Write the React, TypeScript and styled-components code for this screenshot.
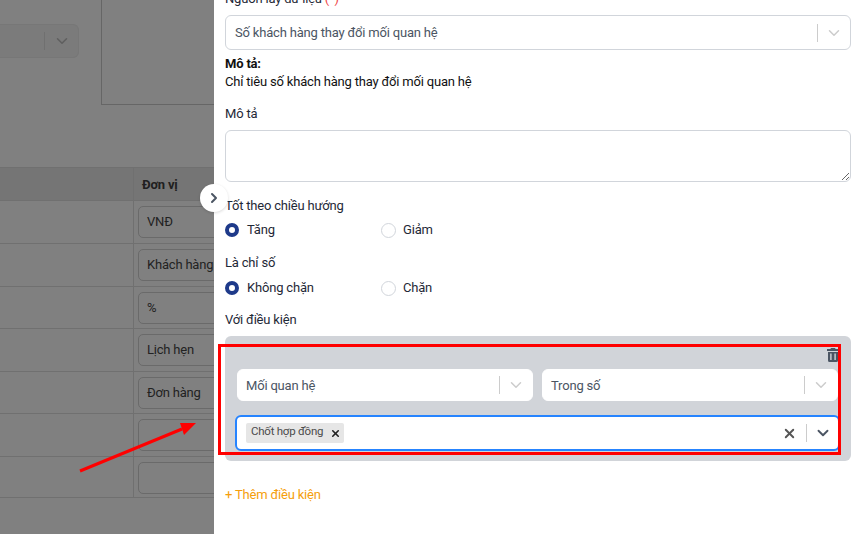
import React from "react";
import styled, { createGlobalStyle } from "styled-components";
import { ChevronDown, ChevronRight, X } from "lucide-react";

const GlobalStyle = createGlobalStyle`
  html, body {
    margin: 0;
    padding: 0;
    overflow: hidden;
    font-family: Roboto, "Liberation Sans", sans-serif;
  }
  * { box-sizing: border-box; }
`;

const units = [
  { label: "VNĐ", height: 43 },
  { label: "Khách hàng", height: 43 },
  { label: "%", height: 42 },
  { label: "Lịch hẹn", height: 43 },
  { label: "Đơn hàng", height: 42 },
  { label: "", height: 43 },
  { label: "", height: 40 },
];

const Page = styled.div`
  position: relative;
  display: flex;
  width: 861px;
  height: 534px;
  overflow: hidden;
`;

const Backdrop = styled.div`
  flex: 0 0 214px;
  background: #808080;
  overflow: hidden;
`;

const TopRow = styled.div`
  display: flex;
  height: 105px;
`;

const DimSelect = styled.div`
  flex: 0 0 79px;
  height: 34px;
  margin-top: 24px;
  display: flex;
  align-items: center;
  justify-content: flex-end;
  padding-right: 7px;
  background: #7b7b7b;
  border: 1px solid #777;
  border-left: none;
  border-radius: 0 6px 6px 0;
  color: #5f5f5f;
`;

const DimDivider = styled.span`
  width: 1px;
  height: 18px;
  margin-right: 8px;
  background: #707070;
`;

const ChartBox = styled.div`
  flex: 1;
  margin-left: 22px;
  border-left: 1px solid #666;
  border-bottom: 1px solid #666;
`;

const Table = styled.div`
  margin-top: 62px;
  border-bottom: 1px solid #707070;
`;

const HeadRow = styled.div`
  display: grid;
  grid-template-columns: 133px 1fr;
  height: 34px;
  background: #757575;
  border-top: 1px solid #707070;
  border-bottom: 1px solid #707070;
`;

const HeadCell = styled.div`
  display: flex;
  align-items: center;
  padding-left: 8px;
  border-left: 1px solid #707070;
  color: #202020;
  font-size: 13px;
  font-weight: 700;
  letter-spacing: -0.2px;
  &:first-child { border-left: none; }
`;

const BodyRow = styled.div<{ $height: number }>`
  display: grid;
  grid-template-columns: 133px 1fr;
  height: ${(p) => p.$height}px;
  border-bottom: 1px solid #707070;
  &:last-child { border-bottom: none; }
`;

const BodyCell = styled.div`
  border-left: 1px solid #707070;
  padding: 5px 0 0 4px;
  &:first-child { border-left: none; }
`;

const UnitInput = styled.div`
  width: 110px;
  height: 32px;
  padding: 0 0 2px 8px;
  display: flex;
  align-items: center;
  border: 1px solid #6a6a6a;
  border-radius: 5px;
  color: #222;
  font-size: 13px;
  letter-spacing: -0.2px;
  white-space: nowrap;
`;

const Drawer = styled.div`
  flex: 1;
  background: #fff;
  padding: 0 10px 0 11px;
  overflow: hidden;
  color: #111827;
  font-size: 13px;
  letter-spacing: -0.19px;
`;

const Label = styled.div<{ $top: number }>`
  margin-top: ${(p) => p.$top}px;
  height: 16px;
  line-height: 16px;
  color: #1f2937;
`;

const Required = styled.span`
  color: #ef4444;
`;

const SelectBox = styled.div<{ $borderless?: boolean }>`
  display: flex;
  align-items: center;
  flex: 1;
  min-width: 0;
  margin-top: ${(p) => (p.$borderless ? 0 : 8)}px;
  background: #fff;
  border: 1px solid ${(p) => (p.$borderless ? "#fff" : "#d1d5db")};
  border-radius: 6px;
  height: ${(p) => (p.$borderless ? 32 : 35)}px;
  padding-left: ${(p) => (p.$borderless ? 8 : 9)}px;
  color: #4b5563;
`;

const SelectText = styled.span`
  flex: 1;
`;

const Divider = styled.span`
  width: 1px;
  height: 18px;
  background: #ccc;
`;

const Caret = styled.span<{ $dark?: boolean }>`
  width: ${(p) => (p.$dark ? 31 : 32)}px;
  display: flex;
  justify-content: center;
  color: ${(p) => (p.$dark ? "#4b5563" : "#ccc")};
`;

const DescTitle = styled.div`
  margin-top: 6px;
  height: 16px;
  line-height: 16px;
  font-weight: 700;
  color: #111;
`;

const DescText = styled.div`
  margin-top: 2px;
  height: 16px;
  line-height: 16px;
  color: #111;
`;

const Area = styled.textarea`
  display: block;
  width: 100%;
  height: 52px;
  margin-top: 8px;
  border: 1px solid #d1d5db;
  border-radius: 6px;
  background: #fff;
  outline: none;
`;

const RadioRow = styled.div<{ $top: number }>`
  display: grid;
  grid-template-columns: 156px 1fr;
  margin-top: ${(p) => p.$top}px;
  height: 16px;
`;

const RadioItem = styled.div`
  display: flex;
  align-items: center;
  gap: 7px;
  line-height: 16px;
  color: #1f2937;
`;

const RadioDot = styled.span<{ $on?: boolean }>`
  width: ${(p) => (p.$on ? 14 : 15)}px;
  height: ${(p) => (p.$on ? 14 : 15)}px;
  margin-right: ${(p) => (p.$on ? 1 : 0)}px;
  border-radius: 50%;
  background: #fff;
  border: ${(p) => (p.$on ? "4.5px solid #1e3a8a" : "1px solid #d1d5db")};
`;

const ConditionPanel = styled.div`
  margin-top: 8px;
  height: 125px;
  background: #d1d4d9;
  border-radius: 6px;
  padding: 12px 13px 0 12px;
`;

const TrashRow = styled.div`
  display: flex;
  justify-content: flex-end;
  height: 22px;
  margin: 0 -1px -1px 0;
  color: #4b5563;
`;

const SelectRow = styled.div`
  display: flex;
  gap: 9px;
`;

const MultiBox = styled.div`
  display: flex;
  align-items: center;
  height: 36px;
  margin: 14px -2px 0 -2px;
  padding-left: 9px;
  background: #fff;
  border: 2px solid #2684ff;
  border-radius: 6px;
`;

const Chip = styled.div`
  display: flex;
  height: 20px;
  width: 98px;
  padding-left: 5px;
  background: #e6e6e6;
  border-radius: 2px;
  color: #4b4b4b;
  font-size: 11.5px;
  letter-spacing: -0.25px;
  line-height: 17px;
  white-space: nowrap;
`;

const ChipClose = styled.span`
  display: flex;
  align-items: center;
  margin-left: 7px;
  color: #222;
`;

const Spacer = styled.span`
  flex: 1;
`;

const ClearIcon = styled.span`
  display: flex;
  margin-right: 9px;
  color: #555;
`;

const AddLink = styled.div`
  margin-top: 26px;
  height: 16px;
  line-height: 16px;
  color: #f59e0b;
`;

const Toggle = styled.div`
  position: absolute;
  left: 200px;
  top: 184px;
  width: 28px;
  height: 28px;
  display: flex;
  align-items: center;
  justify-content: center;
  border-radius: 50%;
  background: #fff;
  color: #4b5563;
  box-shadow: 0 1px 3px rgba(0, 0, 0, 0.15);
`;

const Highlight = styled.div`
  position: absolute;
  left: 218px;
  top: 344px;
  width: 623px;
  height: 111px;
  border: 3px solid #ff0000;
`;

const ArrowMark = styled.svg`
  position: absolute;
  left: 70px;
  top: 415px;
`;

const TrashIcon = () => (
  <svg width="12" height="14" viewBox="0 0 12 14">
    <path
      fill="currentColor"
      d="M4 0h4l.6 1H12v2H0V1h3.4zM1 4h10v8.5A1.5 1.5 0 0 1 9.5 14h-7A1.5 1.5 0 0 1 1 12.5zm2.2 1.5v6.5h1.4V5.5zm4.2 0v6.5h1.4V5.5z"
    />
  </svg>
);

const App = () => {
  return (
    <Page>
      <GlobalStyle />
      <Backdrop>
        <TopRow>
          <DimSelect>
            <DimDivider />
            <ChevronDown size={18} />
          </DimSelect>
          <ChartBox />
        </TopRow>
        <Table>
          <HeadRow>
            <HeadCell />
            <HeadCell>Đơn vị</HeadCell>
          </HeadRow>
          {units.map((u, i) => (
            <BodyRow key={i} $height={u.height}>
              <BodyCell />
              <BodyCell>
                <UnitInput>{u.label}</UnitInput>
              </BodyCell>
            </BodyRow>
          ))}
        </Table>
      </Backdrop>

      <Drawer>
        <Label $top={-9}>
          Nguồn lấy dữ liệu <Required>(*)</Required>
        </Label>
        <SelectBox>
          <SelectText>Số khách hàng thay đổi mối quan hệ</SelectText>
          <Divider />
          <Caret>
            <ChevronDown size={18} />
          </Caret>
        </SelectBox>
        <DescTitle>Mô tả:</DescTitle>
        <DescText>Chỉ tiêu số khách hàng thay đổi mối quan hệ</DescText>
        <Label $top={16}>Mô tả</Label>
        <Area />
        <Label $top={16}>Tốt theo chiều hướng</Label>
        <RadioRow $top={8}>
          <RadioItem>
            <RadioDot $on />
            Tăng
          </RadioItem>
          <RadioItem>
            <RadioDot />
            Giảm
          </RadioItem>
        </RadioRow>
        <Label $top={17}>Là chỉ số</Label>
        <RadioRow $top={9}>
          <RadioItem>
            <RadioDot $on />
            Không chặn
          </RadioItem>
          <RadioItem>
            <RadioDot />
            Chặn
          </RadioItem>
        </RadioRow>
        <Label $top={16}>Với điều kiện</Label>
        <ConditionPanel>
          <TrashRow>
            <TrashIcon />
          </TrashRow>
          <SelectRow>
            <SelectBox $borderless>
              <SelectText>Mối quan hệ</SelectText>
              <Divider />
              <Caret>
                <ChevronDown size={18} />
              </Caret>
            </SelectBox>
            <SelectBox $borderless>
              <SelectText>Trong số</SelectText>
              <Divider />
              <Caret>
                <ChevronDown size={18} />
              </Caret>
            </SelectBox>
          </SelectRow>
          <MultiBox>
            <Chip>
              Chốt hợp đồng
              <ChipClose>
                <X size={11} strokeWidth={3.5} />
              </ChipClose>
            </Chip>
            <Spacer />
            <ClearIcon>
              <X size={15} strokeWidth={3} />
            </ClearIcon>
            <Divider />
            <Caret $dark>
              <ChevronDown size={18} strokeWidth={2.5} />
            </Caret>
          </MultiBox>
        </ConditionPanel>
        <AddLink>+ Thêm điều kiện</AddLink>
      </Drawer>

      <Toggle>
        <ChevronRight size={16} strokeWidth={3} />
      </Toggle>
      <Highlight />
      <ArrowMark width="130" height="60" viewBox="0 0 130 60">
        <line x1="10" y1="56" x2="112" y2="14" stroke="#f00" strokeWidth="3" />
        <polygon points="126,8 110,8 114,20" fill="#f00" />
      </ArrowMark>
    </Page>
  );
};

export default App;
